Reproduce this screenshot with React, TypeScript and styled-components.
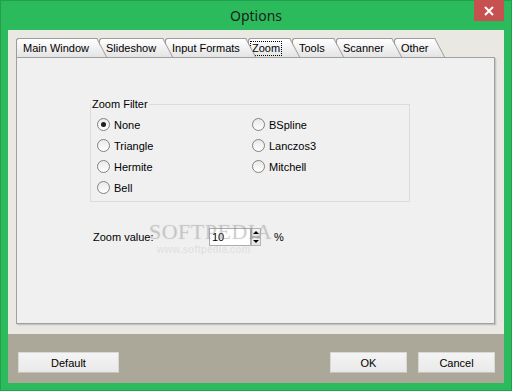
import React from 'react';
import styled, { createGlobalStyle } from 'styled-components';

const GlobalStyle = createGlobalStyle`
  html, body {
    margin: 0;
    padding: 0;
  }
  body {
    font-family: "Liberation Sans", Arial, sans-serif;
    font-size: 11px;
    color: #000;
  }
  * {
    box-sizing: border-box;
  }
`;

const Window = styled.div`
  width: 512px;
  height: 391px;
  background: #2bbb5d;
  border: 1px solid #22a04e;
  display: flex;
  flex-direction: column;
`;

const TitleBar = styled.div`
  position: relative;
  height: 29px;
  display: flex;
  align-items: center;
  justify-content: center;
  font-family: "Noto Sans", "Open Sans", sans-serif;
  font-size: 14px;
  color: #1c1c1c;
`;

const CloseButton = styled.div`
  position: absolute;
  top: -1px;
  right: 7px;
  width: 30px;
  height: 21px;
  background: #c75050;
  display: flex;
  align-items: center;
  justify-content: center;
`;

const Client = styled.div`
  flex: 1;
  margin: 0 7px 7px;
  background: #e9e8e3;
  display: flex;
  flex-direction: column;
`;

const MainArea = styled.div`
  flex: 1;
  padding: 8px 9px 10px 8px;
  display: flex;
  flex-direction: column;
`;

const TabStrip = styled.div`
  display: flex;
  align-items: flex-end;
  height: 19px;
`;

const TabItem = styled.div<{ $w: number; $z: number; $active?: boolean }>`
  position: relative;
  z-index: ${p => p.$z};
  width: ${p => p.$w}px;
  height: 19px;
  margin-right: 2px;
  padding: 3px 0 0 ${p => (p.$active ? 2 : 6)}px;
  border-left: 1px solid #9c9c9c;
  border-top: 1px solid #9c9c9c;
  border-top-left-radius: 3px;
  background: linear-gradient(#ffffff, #e4e4e4);
  white-space: nowrap;
  line-height: 13px;

  &::after {
    content: '';
    position: absolute;
    z-index: -1;
    top: -1px;
    right: 0;
    bottom: 0;
    width: 12px;
    border-top: 1px solid #9c9c9c;
    border-right: 1px solid #9c9c9c;
    background: linear-gradient(#ffffff, #e4e4e4);
    transform: skewX(28deg);
    transform-origin: 100% 0;
  }
`;

const FocusLabel = styled.span`
  display: inline-block;
  padding: 0 1px;
  line-height: 13px;
  outline: 1px dotted #000;
`;

const Panel = styled.div`
  position: relative;
  flex: 1;
  background: #f0f0f0;
  border: 1px solid #a0a0a0;
  box-shadow: 1px 1px 0 #c6c6c6, 2px 2px 0 #dcdcdc;
  padding: 40px 0 0 73px;
`;

const GroupBox = styled.fieldset`
  margin: 0;
  padding: 0;
  width: 320px;
  height: 104px;
  border: 1px solid #dcdcdc;
  border-radius: 0;
`;

const Legend = styled.legend`
  padding: 0 1px;
  margin-left: 0;
  line-height: 13px;
  font-size: 11px;
`;

const RadioGrid = styled.div`
  display: grid;
  grid-template-columns: 155px 155px;
  grid-template-rows: repeat(4, 21px);
  grid-auto-flow: column;
  padding: 3px 0 0 6px;
`;

const RadioItem = styled.label`
  display: flex;
  align-items: center;
  gap: 4px;
`;

const RadioCircle = styled.span<{ $checked?: boolean }>`
  position: relative;
  width: 13px;
  height: 13px;
  border-radius: 50%;
  border: 1px solid #828282;
  background: linear-gradient(#e9e9e9, #ffffff);

  &::after {
    content: '';
    display: ${p => (p.$checked ? 'block' : 'none')};
    position: absolute;
    left: 3px;
    top: 3px;
    width: 5px;
    height: 5px;
    border-radius: 50%;
    background: #1e1e1e;
  }
`;

const ZoomRow = styled.div`
  display: flex;
  align-items: center;
  margin: 26px 0 0 3px;
`;

const FieldLabel = styled.span`
  width: 116px;
`;

const NumberBox = styled.div`
  width: 42px;
  height: 18px;
  border: 1px solid #abadb3;
  background: #fff;
  padding-left: 2px;
  line-height: 16px;
`;

const Spinner = styled.div`
  width: 10px;
  height: 18px;
  display: flex;
  flex-direction: column;
`;

const SpinButton = styled.div<{ $down?: boolean }>`
  flex: 1;
  border: 1px solid #b4b4b4;
  background: linear-gradient(#f6f6f6, #e2e2e2);
  display: flex;
  align-items: center;
  justify-content: center;

  &::before {
    content: '';
    width: 0;
    height: 0;
    border-left: 3px solid transparent;
    border-right: 3px solid transparent;
    ${p => (p.$down ? 'border-top: 3px solid #000;' : 'border-bottom: 3px solid #000;')}
  }
`;

const Percent = styled.span`
  margin-left: 13px;
`;

const Watermark = styled.div`
  position: absolute;
  left: 132px;
  top: 162px;
  pointer-events: none;
  color: rgba(150, 150, 150, 0.16);
  text-align: center;
`;

const WatermarkTitle = styled.div`
  font-family: "Liberation Serif", serif;
  font-size: 22px;
  line-height: 24px;
  letter-spacing: 0.5px;
  text-shadow: 0 0 1px rgba(120, 120, 120, 0.3);
`;

const WatermarkUrl = styled.div`
  font-family: "Liberation Sans", sans-serif;
  font-size: 10px;
  font-weight: bold;
  line-height: 12px;
  margin-left: -14px;
`;

const BottomBar = styled.div`
  height: 49px;
  background: #aca899;
  display: flex;
  align-items: flex-start;
  padding: 18px 9px 0 10px;
`;

const Spacer = styled.div`
  flex: 1;
`;

const Button = styled.button<{ $w: number; $gap?: number }>`
  width: ${p => p.$w}px;
  height: 21px;
  margin-left: ${p => p.$gap ?? 0}px;
  padding: 0;
  border: 1px solid #d8d8d8;
  border-bottom-color: #c2c2c2;
  background: linear-gradient(#f4f4f4, #e9e9e9);
  font-family: "Liberation Sans", Arial, sans-serif;
  font-size: 11px;
  color: #000;
`;

const tabs = [
  { label: 'Main Window', w: 81 },
  { label: 'Slideshow', w: 64 },
  { label: 'Input Formats', w: 81 },
  { label: 'Zoom', w: 42, active: true },
  { label: 'Tools', w: 42 },
  { label: 'Scanner', w: 56 },
  { label: 'Other', w: 41 },
];

const filters = [
  { label: 'None', checked: true },
  { label: 'Triangle' },
  { label: 'Hermite' },
  { label: 'Bell' },
  { label: 'BSpline' },
  { label: 'Lanczos3' },
  { label: 'Mitchell' },
];

const App: React.FC = () => {
  return (
    <>
      <GlobalStyle />
      <Window>
        <TitleBar>
          Options
          <CloseButton>
            <svg width="10" height="10" viewBox="0 0 10 10">
              <path d="M1 1 L9 9 M9 1 L1 9" stroke="#fff" strokeWidth="2" />
            </svg>
          </CloseButton>
        </TitleBar>
        <Client>
          <MainArea>
            <TabStrip>
              {tabs.map((t, i) => (
                <TabItem key={t.label} $w={t.w} $z={20 - i} $active={t.active}>
                  {t.active ? <FocusLabel>{t.label}</FocusLabel> : t.label}
                </TabItem>
              ))}
            </TabStrip>
            <Panel>
              <GroupBox>
                <Legend>Zoom Filter</Legend>
                <RadioGrid>
                  {filters.map(f => (
                    <RadioItem key={f.label}>
                      <RadioCircle $checked={f.checked} />
                      {f.label}
                    </RadioItem>
                  ))}
                </RadioGrid>
              </GroupBox>
              <ZoomRow>
                <FieldLabel>Zoom value:</FieldLabel>
                <NumberBox>10</NumberBox>
                <Spinner>
                  <SpinButton />
                  <SpinButton $down />
                </Spinner>
                <Percent>%</Percent>
              </ZoomRow>
              <Watermark>
                <WatermarkTitle>SOFTPEDIA</WatermarkTitle>
                <WatermarkUrl>www.softpedia.com</WatermarkUrl>
              </Watermark>
            </Panel>
          </MainArea>
          <BottomBar>
            <Button $w={101}>Default</Button>
            <Spacer />
            <Button $w={77}>OK</Button>
            <Button $w={77} $gap={11}>Cancel</Button>
          </BottomBar>
        </Client>
      </Window>
    </>
  );
};

export default App;
